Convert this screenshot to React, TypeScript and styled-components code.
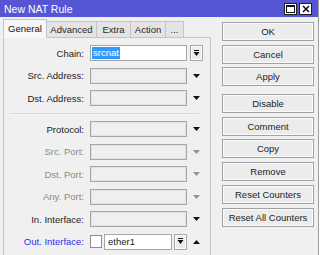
import styled, { createGlobalStyle } from 'styled-components';

const GlobalStyle = createGlobalStyle`
  html, body {
    margin: 0;
    padding: 0;
    background: #ffffff;
  }

  body {
    font-family: "Liberation Sans", Arial, sans-serif;
    font-size: 9.5px;
    color: #1c1c1c;
  }
`;

const Window = styled.div`
  background: #f0f0f0;
  border-right: 1px solid #9c9c9c;
  height: 255px;
  overflow: hidden;
  width: 318px;
`;

const TitleBar = styled.div`
  align-items: center;
  background: #5656d4;
  display: flex;
  height: 17px;
  justify-content: space-between;
  padding: 0 6px 0 4px;
`;

const Title = styled.span`
  color: #ffffff;
  font-size: 10.5px;
`;

const WinControls = styled.div`
  display: flex;
  gap: 2px;
`;

const WinBtn = styled.div`
  align-items: center;
  background: #ffffff;
  border: 1px solid #202020;
  box-sizing: border-box;
  display: flex;
  height: 12px;
  justify-content: center;
  width: 13px;
`;

const Body = styled.div`
  display: flex;
`;

const LeftCol = styled.div`
  padding: 2px 0 0 3px;
  width: 208px;
`;

const TabStrip = styled.div`
  align-items: flex-end;
  display: flex;
  height: 19px;
  margin-bottom: -1px;
  position: relative;
  z-index: 1;
`;

const Tab = styled.div<{ $w: number; $active?: boolean }>`
  align-items: center;
  background: ${(p) => (p.$active ? '#f7f7f7' : '#e4e4e4')};
  border: 1px solid #c4c4c4;
  border-bottom: ${(p) => (p.$active ? '1px solid #f7f7f7' : '1px solid #c4c4c4')};
  box-sizing: border-box;
  color: ${(p) => (p.$active ? '#111' : '#2a2a2a')};
  display: flex;
  height: ${(p) => (p.$active ? 19 : 17)}px;
  justify-content: center;
  white-space: nowrap;
  width: ${(p) => p.$w}px;

  & + & {
    border-left: none;
  }
`;

const Panel = styled.div`
  background: #f0f0f0;
  border: 1px solid #c4c4c4;
  border-bottom: none;
  height: 240px;
  padding-top: 7px;
`;

const FormGrid = styled.div`
  align-items: center;
  display: grid;
  grid-template-columns: 86px 97px 18px;
  grid-template-rows: repeat(3, 16px) 2px repeat(6, 16px);
  row-gap: 6.5px;
`;

const Label = styled.div<{ $tone?: 'dark' | 'muted' | 'link' }>`
  color: ${(p) => (p.$tone === 'muted' ? '#8a8a8a' : p.$tone === 'link' ? '#2f2fef' : '#1c1c1c')};
  padding-right: 6px;
  text-align: right;
  white-space: nowrap;
`;

const Field = styled.div<{ $white?: boolean; $grow?: boolean }>`
  align-items: center;
  background: ${(p) => (p.$white ? '#ffffff' : '#efefef')};
  border: 1px solid #a6a6a6;
  box-shadow: inset 0 0 0 1px ${(p) => (p.$white ? '#ffffff' : '#e2e2e2')};
  box-sizing: border-box;
  display: flex;
  flex: ${(p) => (p.$grow ? '1' : 'none')};
  height: 16px;
  padding-left: 1px;
  width: ${(p) => (p.$grow ? 'auto' : '97px')};
`;

const Selected = styled.span`
  background: #3399ff;
  color: #ffffff;
  line-height: 12px;
  padding: 0 1px;
`;

const Value = styled.span`
  color: #1c1c1c;
  padding-left: 2px;
`;

const ArrowCell = styled.div`
  align-items: center;
  display: flex;
  height: 16px;
  justify-content: center;
`;

const Separator = styled.div`
  border-bottom: 1px solid #fafafa;
  border-top: 1px solid #d6d6d6;
  grid-column: 1 / -1;
  height: 0;
  margin: 0 6px;
`;

const DropBtn = styled.div`
  align-items: center;
  background: #ececec;
  border: 1px solid #a6a6a6;
  box-shadow: inset 0 0 0 1px #fcfcfc;
  box-sizing: border-box;
  display: flex;
  flex: none;
  height: 16px;
  justify-content: center;
  width: 13px;
`;

const Combo = styled.div`
  align-items: center;
  display: flex;
  gap: 2px;
  width: 97px;
`;

const Checkbox = styled.div`
  background: #ffffff;
  border: 1px solid #8e8e8e;
  box-sizing: border-box;
  flex: none;
  height: 13px;
  width: 12px;
`;

const ButtonCol = styled.div`
  display: flex;
  flex-direction: column;
  gap: 3.7px;
  padding: 5px 0 0 11px;
`;

const ActionButton = styled.div<{ $spaced?: boolean }>`
  align-items: center;
  background: #ececec;
  border: 1px solid #a2a2a2;
  box-shadow: inset 0 0 0 1px #fbfbfb;
  box-sizing: border-box;
  display: flex;
  flex: none;
  height: 19px;
  justify-content: center;
  margin-top: ${(p) => (p.$spaced ? 4 : 0)}px;
  white-space: nowrap;
  width: 92px;
`;

const Triangle = ({ up, muted }: { up?: boolean; muted?: boolean }) => (
  <svg width="7" height="4" viewBox="0 0 7 4">
    <polygon
      points={up ? '0,4 7,4 3.5,0' : '0,0 7,0 3.5,4'}
      fill={muted ? '#8b998b' : '#111'}
    />
  </svg>
);

const DropIcon = () => (
  <svg width="7" height="7" viewBox="0 0 7 7">
    <rect x="1" y="0" width="5" height="1" fill="#111" />
    <polygon points="0.5,2 6.5,2 3.5,6" fill="#111" />
  </svg>
);

type Row = {
  label: string;
  tone?: 'dark' | 'muted' | 'link';
};

const topRows: Row[] = [{ label: 'Src. Address:' }, { label: 'Dst. Address:' }];

const bottomRows: Row[] = [
  { label: 'Protocol:' },
  { label: 'Src. Port:', tone: 'muted' },
  { label: 'Dst. Port:', tone: 'muted' },
  { label: 'Any. Port:', tone: 'muted' },
  { label: 'In. Interface:' },
];

const tabs = [
  { name: 'General', w: 44 },
  { name: 'Advanced', w: 50 },
  { name: 'Extra', w: 34 },
  { name: 'Action', w: 35 },
  { name: '...', w: 18 },
];

const buttons = [
  'OK',
  'Cancel',
  'Apply',
  'Disable',
  'Comment',
  'Copy',
  'Remove',
  'Reset Counters',
  'Reset All Counters',
];

const SelectRow = ({ label, tone }: Row) => (
  <>
    <Label $tone={tone}>{label}</Label>
    <Field />
    <ArrowCell>
      <Triangle muted={tone === 'muted'} />
    </ArrowCell>
  </>
);

export default function App() {
  return (
    <>
      <GlobalStyle />
      <Window>
        <TitleBar>
          <Title>New NAT Rule</Title>
          <WinControls>
            <WinBtn>
              <svg width="9" height="8" viewBox="0 0 9 8">
                <rect x="0.5" y="0.5" width="8" height="7" fill="none" stroke="#111" />
                <rect x="0" y="0" width="9" height="2" fill="#111" />
              </svg>
            </WinBtn>
            <WinBtn>
              <svg width="8" height="8" viewBox="0 0 8 8">
                <path d="M1 1 L7 7 M7 1 L1 7" stroke="#111" strokeWidth="1.6" />
              </svg>
            </WinBtn>
          </WinControls>
        </TitleBar>

        <Body>
          <LeftCol>
            <TabStrip>
              {tabs.map((t, i) => (
                <Tab key={t.name} $w={t.w} $active={i === 0}>
                  {t.name}
                </Tab>
              ))}
            </TabStrip>

            <Panel>
              <FormGrid>
                <Label>Chain:</Label>
                <Field $white>
                  <Selected>srcnat</Selected>
                </Field>
                <ArrowCell>
                  <DropBtn>
                    <DropIcon />
                  </DropBtn>
                </ArrowCell>

                {topRows.map((r) => (
                  <SelectRow key={r.label} {...r} />
                ))}

                <Separator />

                {bottomRows.map((r) => (
                  <SelectRow key={r.label} {...r} />
                ))}

                <Label $tone="link">Out. Interface:</Label>
                <Combo>
                  <Checkbox />
                  <Field $white $grow>
                    <Value>ether1</Value>
                  </Field>
                  <DropBtn>
                    <DropIcon />
                  </DropBtn>
                </Combo>
                <ArrowCell>
                  <Triangle up />
                </ArrowCell>
              </FormGrid>
            </Panel>
          </LeftCol>

          <ButtonCol>
            {buttons.map((b) => (
              <ActionButton key={b} $spaced={b === 'Disable'}>
                {b}
              </ActionButton>
            ))}
          </ButtonCol>
        </Body>
      </Window>
    </>
  );
}
